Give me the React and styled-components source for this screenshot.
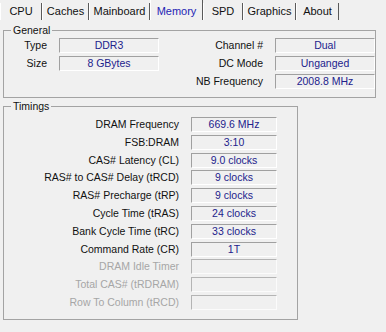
import React from "react";
import styled, { createGlobalStyle } from "styled-components";

const Global = createGlobalStyle`
  html, body { margin: 0; padding: 0; background: #f0f0f0; }
  body { font-family: "Liberation Sans", Arial, sans-serif; font-size: 10.5px; color: #111; }
`;

const Window = styled.div`
  width: 386px;
  height: 332px;
  background: #f0f0f0;
  padding: 0 0 0 3px;
  box-sizing: border-box;
  overflow: hidden;
`;

const TabBar = styled.div`
  display: flex;
  align-items: flex-end;
  height: 21px;
  margin-left: -3px;
`;

const Tab = styled.div`
  box-sizing: border-box;
  width: ${(p) => p.$w}px;
  height: ${(p) => (p.$active ? 20 : 17)}px;
  margin-bottom: 1px;
  display: flex;
  align-items: center;
  justify-content: center;
  padding-top: ${(p) => (p.$active ? 3 : 0)}px;
  padding-bottom: 1px;
  border-left: 1px solid #ffffff;
  border-right: 1px solid #5a5a5a;
  color: ${(p) => (p.$active ? "#2424b4" : "#111")};
  font-size: 11px;
  white-space: nowrap;
`;

const Group = styled.fieldset`
  box-sizing: border-box;
  width: ${(p) => p.$w}px;
  margin: ${(p) => p.$mt}px 0 0 0;
  padding: ${(p) => p.$pt}px 0 ${(p) => p.$pb}px 0;
  border: 1px solid #a3a3a3;
  min-width: 0;
`;

const Legend = styled.legend`
  margin-left: 7px;
  padding: 0 2px;
  line-height: 12px;
  font-size: 10.5px;
  color: #111;
`;

const GeneralGrid = styled.div`
  display: grid;
  grid-template-columns: 43px 100px 92px 100px;
  column-gap: 12px;
  row-gap: 3px;
  grid-auto-rows: 15px;
  & > :nth-child(4n + 3) { margin-left: -4px; }
`;

const TimingGrid = styled.div`
  display: grid;
  grid-template-columns: 175px 86px;
  column-gap: 12px;
  row-gap: 2.8px;
  grid-auto-rows: 15px;
`;

const Label = styled.div`
  text-align: right;
  line-height: 15px;
  white-space: nowrap;
  color: ${(p) => (p.$disabled ? "#a6a6a6" : "#111")};
`;

const Value = styled.div`
  box-sizing: border-box;
  height: 15px;
  line-height: 13px;
  text-align: center;
  color: #22228c;
  border-top: 1px solid #a0a0a0;
  border-left: 1px solid #a0a0a0;
  border-right: 1px solid #ffffff;
  border-bottom: 1px solid #ffffff;
  white-space: nowrap;
  opacity: ${(p) => (p.$disabled ? 0.75 : 1)};
`;

const Empty = styled.div``;

const tabs = [
  ["CPU", 42],
  ["Caches", 47],
  ["Mainboard", 61],
  ["Memory", 53],
  ["SPD", 40],
  ["Graphics", 53],
  ["About", 43],
];

const timings = [
  ["DRAM Frequency", "669.6 MHz"],
  ["FSB:DRAM", "3:10"],
  ["CAS# Latency (CL)", "9.0 clocks"],
  ["RAS# to CAS# Delay (tRCD)", "9 clocks"],
  ["RAS# Precharge (tRP)", "9 clocks"],
  ["Cycle Time (tRAS)", "24 clocks"],
  ["Bank Cycle Time (tRC)", "33 clocks"],
  ["Command Rate (CR)", "1T"],
  ["DRAM Idle Timer", "", true],
  ["Total CAS# (tRDRAM)", "", true],
  ["Row To Column (tRCD)", "", true],
];

export default function App() {
  return (
    <>
      <Global />
      <Window>
        <TabBar>
          {tabs.map(([t, w]) => (
            <Tab key={t} $w={w} $active={t === "Memory"}>
              {t}
            </Tab>
          ))}
        </TabBar>
        <Group $w={373} $mt={3} $pt={2} $pb={8}>
          <Legend>General</Legend>
          <GeneralGrid>
            <Label>Type</Label>
            <Value>DDR3</Value>
            <Label>Channel #</Label>
            <Value>Dual</Value>
            <Label>Size</Label>
            <Value>8 GBytes</Value>
            <Label>DC Mode</Label>
            <Value>Unganged</Value>
            <Empty />
            <Empty />
            <Label>NB Frequency</Label>
            <Value>2008.8 MHz</Value>
          </GeneralGrid>
        </Group>
        <Group $w={295} $mt={2} $pt={5} $pb={9}>
          <Legend>Timings</Legend>
          <TimingGrid>
            {timings.map(([l, v, d]) => (
              <React.Fragment key={l}>
                <Label $disabled={d}>{l}</Label>
                <Value $disabled={d}>{v}</Value>
              </React.Fragment>
            ))}
          </TimingGrid>
        </Group>
      </Window>
    </>
  );
}
